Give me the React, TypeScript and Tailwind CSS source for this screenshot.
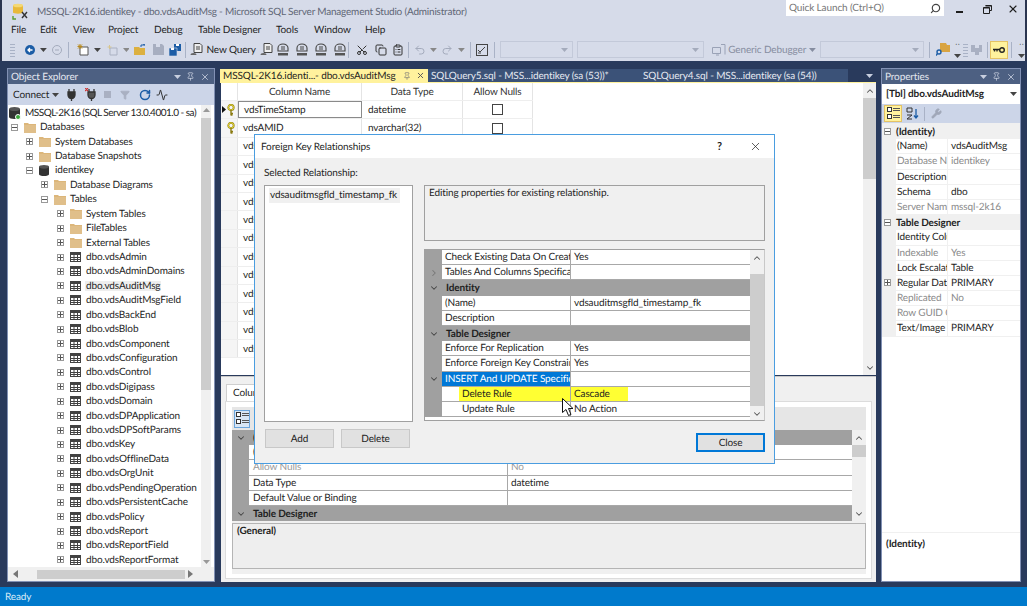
import React from "react";
import { Search, X, Pin, ChevronDown, ChevronUp, ChevronRight, RotateCw, Activity, Filter, Scissors, Copy, ClipboardList, Undo2, Redo2, Wrench } from "lucide-react";

const Caret = ({ c = "#444", className = "" }: { c?: string; className?: string }) => (
  <svg width="7" height="4" viewBox="0 0 7 4" className={className}><path d="M0 0h7L3.5 4z" fill={c} /></svg>
);
const Folder = () => (
  <svg width="12" height="11" viewBox="0 0 12 11" className="shrink-0"><path d="M0 1h4l1 1h7v9H0z" fill="#dcb67a" /><path d="M0 3h12v8H0z" fill="#e0bf8a" /></svg>
);
const TableIc = () => (
  <svg width="11" height="10" viewBox="0 0 11 10" className="shrink-0"><rect x=".5" y=".5" width="10" height="9" fill="#fff" stroke="#424242" /><path d="M0 1h11v2H0z" fill="#424242" /><path d="M.5 5.500h10M.5 7.500h10M4 3v7M7.500 3v7" stroke="#424242" strokeWidth="1" fill="none" /></svg>
);
const Db = ({ s = 11 }: { s?: number }) => (
  <svg width={s} height={s + 1} viewBox="0 0 11 12" className="shrink-0"><path d="M0 2v8c0 1.200 2.500 2 5.500 2s5.500-.8 5.500-2V2z" fill="#333" /><ellipse cx="5.500" cy="2" rx="5.500" ry="2" fill="#555" /></svg>
);
const Box = ({ minus = false }: { minus?: boolean }) => (
  <span className="w-[7px] h-[7px] border border-[#9a9a9a] bg-white flex items-center justify-center shrink-0">
    <svg width="5" height="5" viewBox="0 0 5 5"><path d={minus ? "M0 2.500h5" : "M0 2.500h5M2.500 0v5"} stroke="#555" fill="none" /></svg>
  </span>
);
const Key = () => (
  <svg width="8" height="12" viewBox="0 0 8 12" className="shrink-0"><circle cx="4" cy="3.500" r="2.700" fill="none" stroke="#8a7a10" strokeWidth="1.800" /><circle cx="4" cy="3.500" r="2.700" fill="none" stroke="#f2e23a" strokeWidth=".9" /><path d="M4 6v5.500M4 9.500h2M4 11h1.500" stroke="#8a7a10" strokeWidth="1.400" fill="none" /></svg>
);
const Plug = ({ red = false }: { red?: boolean }) => (
  <svg width="13" height="13" viewBox="0 0 13 13"><path d="M4 1v3M9 1v3M3 4h7v3a3.500 3.500 0 0 1-7 0zM6.500 10v3" stroke="#333" strokeWidth="1.300" fill={red ? "#555" : "#333"} />{red && <path d="M0 0l3 3M3 0L0 3" stroke="#c33" strokeWidth="1.200" />}</svg>
);
const PropsIc = () => (
  <svg width="13" height="13" viewBox="0 0 13 13"><rect x=".5" y=".5" width="4" height="4" fill="#fff" stroke="#333" /><rect x=".5" y="7.500" width="4" height="4" fill="#fff" stroke="#333" /><path d="M6 1.500h7M6 3.500h7M6 8.500h7M6 10.500h7" stroke="#555" fill="none" /></svg>
);
const QueryIc = () => (
  <svg width="13" height="13" viewBox="0 0 13 13" className="shrink-0"><path d="M4 .5h6l2 2v7H4z" fill="#eee" stroke="#444" /><path d="M6 4h4M6 6h4" stroke="#444" fill="none" /><path d="M.5 12a3 2 0 0 1 6 0" fill="#666" /></svg>
);
const DbQ = () => (
  <svg width="12" height="13" viewBox="0 0 12 13" className="shrink-0"><path d="M1 5a5 4 0 0 1 10 0v3H1z" fill="none" stroke="#444" strokeWidth="1.100" /><path d="M4 4h4M4 6h4" stroke="#444" fill="none" /><path d="M1 10h10v2.500H1z" fill="#555" /></svg>
);
const Sep = ({ ml }: { ml: string }) => <span className={`w-px h-[16px] shrink-0 bg-[#a9b2c6] ${ml}`} />;

const tree: [number, string, string][] = [
  [0, "m", "Databases"],
  [1, "p", "System Databases"],
  [1, "p", "Database Snapshots"],
  [1, "d", "identikey"],
  [2, "p", "Database Diagrams"],
  [2, "m", "Tables"],
  [3, "p", "System Tables"],
  [3, "p", "FileTables"],
  [3, "p", "External Tables"],
  ...[
    "Admin", "AdminDomains", "AuditMsg", "AuditMsgField", "BackEnd", "Blob", "Component", "Configuration", "Control", "Digipass", "Domain", "DPApplication", "DPSoftParams", "Key", "OfflineData", "OrgUnit", "PendingOperation", "PersistentCache", "Policy", "Report", "ReportField", "ReportFormat",
  ].map((n) => [3, "t", "dbo.vds" + n] as [number, string, string]),
];
const indent = ["ml-[11px]", "ml-[26px]", "ml-[41px]", "ml-[57px]"];

const propsRows: [string, string, number][] = [
  ["(Identity)", "", 2],
  ["(Name)", "vdsAuditMsg", 0],
  ["Database Name", "identikey", 1],
  ["Description", "", 0],
  ["Schema", "dbo", 0],
  ["Server Name", "mssql-2k16", 1],
  ["Table Designer", "", 2],
  ["Identity Column", "", 0],
  ["Indexable", "Yes", 1],
  ["Lock Escalation", "Table", 0],
  ["Regular Data Space", "PRIMARY", 3],
  ["Replicated", "No", 1],
  ["Row GUID Column", "", 1],
  ["Text/Image", "PRIMARY", 0],
];

const cols = ["vdsTimeStamp", "vdsAMID", "vdsAMType", "vdsAMData", "vdsAMUser", "vdsAMHost", "vdsAMAddr", "vdsAMAgent", "vdsAMCode", "vdsAMDesc", "vdsAMInfo", "vdsAMOrg", "vdsAMRef", "vdsAMTime"];

type GR = { k: "cat" | "row"; n: string; v?: string; chev?: "d" | "r"; sel?: boolean; yellow?: boolean; child?: boolean; gray?: boolean };
const fk: GR[] = [
  { k: "row", n: "Check Existing Data On Creation", v: "Yes" },
  { k: "row", n: "Tables And Columns Specification", v: "", chev: "r" },
  { k: "cat", n: "Identity", chev: "d" },
  { k: "row", n: "(Name)", v: "vdsauditmsgfld_timestamp_fk" },
  { k: "row", n: "Description", v: "" },
  { k: "cat", n: "Table Designer", chev: "d" },
  { k: "row", n: "Enforce For Replication", v: "Yes" },
  { k: "row", n: "Enforce Foreign Key Constraint", v: "Yes" },
  { k: "row", n: "INSERT And UPDATE Specification", v: "", chev: "d", sel: true },
  { k: "row", n: "Delete Rule", v: "Cascade", child: true, yellow: true },
  { k: "row", n: "Update Rule", v: "No Action", child: true },
];
const lower: GR[] = [
  { k: "cat", n: "(General)", chev: "d" },
  { k: "row", n: "(Name)", v: "vdsTimeStamp" },
  { k: "row", n: "Allow Nulls", v: "No", gray: true },
  { k: "row", n: "Data Type", v: "datetime" },
  { k: "row", n: "Default Value or Binding", v: "" },
  { k: "cat", n: "Table Designer", chev: "d" },
];

const Grid = ({ rows, nameW, pad = "pl-[3px]" }: { rows: GR[]; nameW: string; pad?: string }) => (
  <div className="flex-1 min-w-0 text-[#1e1e1e]">
    {rows.map((r) =>
      r.k === "cat" ? (
        <div key={r.n} className="h-[15.2px] bg-[#a0a0a0] flex items-center">
          <span className="w-[17px] flex justify-center shrink-0"><ChevronDown size={10} strokeWidth={2.5} color="#444" /></span>
          <span className="font-bold pl-[4px]">{r.n}</span>
        </div>
      ) : (
        <div key={r.n} className="h-[15.2px] flex bg-[#a0a0a0]">
          <span className="w-[17px] flex justify-center items-center shrink-0">
            {r.chev === "r" && <ChevronRight size={10} strokeWidth={2.5} color="#777" />}
            {r.chev === "d" && <ChevronDown size={10} strokeWidth={2.5} color="#444" />}
          </span>
          <div className="flex-1 min-w-0 flex bg-white border-b border-[#a8a8a8]">
            <div className={`${nameW} shrink-0 flex border-r border-[#a8a8a8] overflow-hidden`}>
              {r.child && <span className="w-[17px] shrink-0 bg-white" />}
              <span className={`flex-1 min-w-0 ${pad} leading-[15px] whitespace-nowrap overflow-hidden ${r.sel ? "bg-[#0078d7] text-white" : ""} ${r.yellow ? "bg-[#ffff33]" : ""} ${r.gray ? "text-[#9a9a9a]" : ""}`}>{r.n}</span>
            </div>
            <span className={`pl-[3px] leading-[15px] whitespace-nowrap ${r.yellow ? "bg-[#ffff33] w-[57px]" : ""} ${r.gray ? "text-[#9a9a9a]" : ""}`}>{r.v}</span>
          </div>
        </div>
      )
    )}
  </div>
);

const Scroll = ({ w = "w-[14px]", top, h }: { w?: string; top: string; h: string }) => (
  <div className={`${w} shrink-0 h-full bg-[#f0f0f0] flex flex-col items-center`}>
    <span className="h-[15px] shrink-0 flex items-center"><ChevronUp size={10} strokeWidth={2.5} color="#555" /></span>
    <div className={`w-full flex-1 ${top}`}><div className={`w-full bg-[#cdcdcd] ${h}`} /></div>
    <span className="h-[15px] shrink-0 flex items-center"><ChevronDown size={10} strokeWidth={2.5} color="#555" /></span>
  </div>
);

export default function App() {
  return (
    <div className="relative w-[1027px] h-[606px] overflow-hidden flex flex-col bg-[#293a5c] font-['Lato',sans-serif] text-[10px] tracking-[-0.12px] leading-none text-[#1e1e1e] [text-rendering:geometricPrecision]">
      {/* Chrome */}
      <div className="bg-[#d6dbe9] h-[61px] shrink-0 border-l-2 border-r-2 border-[#2b3550]">
        <div className="h-[22px] flex items-start">
          <svg width="17" height="17" viewBox="0 0 17 17" className="ml-[10px] mt-[3px] shrink-0">
            <path d="M1 2.500C1 .8 11 .8 11 2.500v7c0 1.500-10 1.500-10 0z" fill="#e8b93a" /><ellipse cx="6" cy="2.500" rx="5" ry="1.800" fill="#f4d876" />
            <path d="M10 9l5 6M15 9l-5 6" stroke="#333" strokeWidth="1.400" /><path d="M1 13v3h3" stroke="#5a9e2f" strokeWidth="1.400" fill="none" />
          </svg>
          <span className="ml-[8px] mt-[7px] text-[#5f6675] whitespace-nowrap tracking-[-0.2px]">MSSQL-2K16.identikey - dbo.vdsAuditMsg - Microsoft SQL Server Management Studio (Administrator)</span>
          <div className="ml-auto w-[158px] h-[16px] bg-white flex items-center justify-between px-[3px] text-[#777] mr-[8px]">
            <span>Quick Launch (Ctrl+Q)</span>
            <Search size={11} color="#444" className="-scale-x-100" strokeWidth={2.5} />
          </div>
          <div className="flex items-center w-[73px] h-[18px] text-[#1e1e1e]">
            <span className="ml-[4px] w-[7px] h-[2px] bg-[#1e1e1e] mt-[6px]" />
            <svg width="9" height="9" viewBox="0 0 9 9" className="ml-[20px]"><path d="M2.500.5h6v5h-2M.5 2.500h6v6h-6z" fill="none" stroke="#1e1e1e" /><path d="M.5 3h6M2.500 1h6" stroke="#1e1e1e" /></svg>
            <X size={12} strokeWidth={2.2} className="ml-[15px]" />
          </div>
        </div>
        <div className="h-[16px] flex items-center text-[#1e1e1e] pl-[9px]">
          <span className="w-[29px]">File</span>
          <span className="w-[33px]">Edit</span>
          <span className="w-[35px]">View</span>
          <span className="w-[46px]">Project</span>
          <span className="w-[44px]">Debug</span>
          <span className="w-[78px]">Table Designer</span>
          <span className="w-[38px]">Tools</span>
          <span className="w-[51px]">Window</span>
          <span>Help</span>
        </div>
        <div className="h-[23px] flex items-center">
          <span className="ml-[8px] w-[5px] h-[14px] bg-[repeating-linear-gradient(0deg,#a9b2c6_0_1px,transparent_1px_3px)] shrink-0" />
          <svg width="10" height="10" viewBox="0 0 10 10" className="ml-[10px] shrink-0"><circle cx="5" cy="5" r="5" fill="#1c5da6" /><path d="M7.500 5h-4M5 3L3 5l2 2" stroke="#fff" strokeWidth="1.300" fill="none" /></svg>
          <Caret className="ml-[5px]" />
          <svg width="10" height="10" viewBox="0 0 10 10" className="ml-[5px] shrink-0"><circle cx="5" cy="5" r="4.500" fill="none" stroke="#a4abbc" /><path d="M3 5h4" stroke="#a4abbc" /></svg>
          <Sep ml="ml-[6px]" />
          <svg width="12" height="13" viewBox="0 0 12 13" className="ml-[8px] shrink-0"><path d="M3 4h8v8H3z" fill="#fff" stroke="#555" /><path d="M3 1v5M0.500 3.500h5M1 1.500l4 4M5 1.500l-4 4" stroke="#b88a1e" fill="none" /></svg>
          <Caret className="ml-[5px]" />
          <svg width="11" height="12" viewBox="0 0 11 12" className="ml-[6px] shrink-0"><path d="M3 4h7v7H3z" fill="none" stroke="#aab1c2" /><path d="M2.500 1v4M.5 3h4" stroke="#d8c58c" /></svg>
          <Caret c="#888" className="ml-[5px]" />
          <svg width="12" height="11" viewBox="0 0 12 11" className="ml-[5px] shrink-0"><path d="M0 3h5l1 1h5v7H0z" fill="#dcb040" /><path d="M7 3V1h4l-2-1" stroke="#1c5da6" fill="none" /></svg>
          <svg width="11" height="11" viewBox="0 0 11 11" className="ml-[7px] shrink-0"><path d="M0 0h9l2 2v9H0z" fill="#a7aec0" /><path d="M3 0h4v3H3z" fill="#d6dbe9" /></svg>
          <svg width="12" height="12" viewBox="0 0 12 12" className="ml-[5px] shrink-0"><path d="M5 0h7v7H5z" fill="#1c5da6" /><path d="M0 4h8v8H0z" fill="#1c5da6" stroke="#d6dbe9" strokeWidth=".6" /><path d="M2 4h3v2H2zM7 0h3v2H7z" fill="#fff" /></svg>
          <Sep ml="ml-[4px]" />
          <span className="ml-[4px]"><QueryIc /></span>
          <span className="ml-[3px] w-[47px] whitespace-nowrap">New Query</span>
          <span className="ml-[7px]"><QueryIc /></span>
          <span className="ml-[4px]"><DbQ /></span>
          <span className="ml-[7px]"><DbQ /></span>
          <span className="ml-[7px]"><DbQ /></span>
          <span className="ml-[7px]"><DbQ /></span>
          <Sep ml="ml-[2px]" />
          <Scissors size={12} color="#333" className="ml-[7px] shrink-0 -rotate-90" />
          <Copy size={12} color="#333" className="ml-[7px] shrink-0" />
          <ClipboardList size={12} color="#333" className="ml-[5px] shrink-0" />
          <Sep ml="ml-[4px]" />
          <Undo2 size={12} color="#a4abbc" className="ml-[5px] shrink-0" />
          <Caret c="#888" className="ml-[4px]" />
          <Redo2 size={12} color="#a4abbc" className="ml-[4px] shrink-0" />
          <Caret c="#888" className="ml-[5px]" />
          <Sep ml="ml-[5px]" />
          <svg width="12" height="12" viewBox="0 0 12 12" className="ml-[5px] shrink-0"><rect x=".5" y=".5" width="11" height="11" fill="none" stroke="#444" /><path d="M2 6l2 2 5-5M2 9h3" stroke="#444" fill="none" /></svg>
          <Sep ml="ml-[6px]" />
          <div className="ml-[5px] w-[73px] h-[17px] border border-[#c3c9d9] flex items-center justify-end pr-[4px] shrink-0"><Caret c="#a4abbc" /></div>
          <div className="ml-[4px] w-[127px] h-[17px] border border-[#c3c9d9] flex items-center justify-end pr-[4px] shrink-0"><Caret c="#a4abbc" /></div>
          <svg width="14" height="12" viewBox="0 0 14 12" className="ml-[8px] shrink-0"><path d="M.5 3.500h8v6h-8zM4 11h3M9 .5h4v10" fill="none" stroke="#9aa2b6" /></svg>
          <span className="ml-[2px] w-[77px] whitespace-nowrap text-[#868da0]">Generic Debugger</span>
          <Caret c="#868da0" className="ml-[4px]" />
          <div className="ml-[4px] w-[104px] h-[17px] border border-[#c3c9d9] flex items-center justify-end pr-[4px] shrink-0"><Caret c="#a4abbc" /></div>
          <Sep ml="ml-[5px]" />
          <svg width="14" height="13" viewBox="0 0 14 13" className="ml-[6px] shrink-0"><path d="M4 0h6l1 2h3v7H4z" fill="#d9a441" /><circle cx="3" cy="9" r="2" fill="none" stroke="#1c5da6" strokeWidth="1.400" /><path d="M1.500 10.500L0 12.500" stroke="#1c5da6" strokeWidth="1.400" /></svg>
          <div className="ml-[5px] w-[6px] flex flex-col items-center gap-[6px] shrink-0"><span className="text-[6px] tracking-[1px]">··</span><Caret /></div>
          <span className="ml-[2px] w-[5px] h-[14px] bg-[repeating-linear-gradient(0deg,#a9b2c6_0_1px,transparent_1px_3px)] shrink-0" />
          <svg width="11" height="11" viewBox="0 0 11 11" className="ml-[3px] shrink-0"><path d="M0 1h4v3h4V1h3v7H8v3H4V8H0z" fill="#a9b0c2" /></svg>
          <Sep ml="ml-[5px]" />
          <div className="ml-[2px] w-[18px] h-[18px] bg-[#fff29d] border border-[#e5c365] flex items-center justify-center shrink-0">
            <svg width="12" height="6" viewBox="0 0 12 6"><circle cx="9" cy="3" r="2.300" fill="none" stroke="#222" strokeWidth="1.400" /><path d="M0 2.500h7M1.500 2.500v2M4 2.500v2" stroke="#222" strokeWidth="1.300" fill="none" /></svg>
          </div>
          <Sep ml="ml-[3px]" />
          <div className="ml-[7px] w-[6px] flex flex-col items-center gap-[6px] shrink-0"><span className="text-[6px] tracking-[1px]">··</span><Caret /></div>
        </div>
      </div>

      {/* Dock */}
      <div className="flex-1 min-h-0 flex pt-[7px] pb-[5px] pl-[7px] pr-[6px] gap-[5px]">
        {/* Object Explorer */}
        <div className="w-[208px] shrink-0 flex flex-col border border-[#8291b4] bg-white">
          <div className="h-[15px] shrink-0 bg-[#4d6082] flex items-center pl-[3px] pr-[4px] text-[#e6e9f1]">
            <span>Object Explorer</span>
            <span className="ml-auto flex items-center gap-[5px]"><Caret c="#c8cfdf" /><Pin size={9} color="#c8cfdf" /><X size={10} color="#c8cfdf" strokeWidth={2} /></span>
          </div>
          <div className="h-[21px] shrink-0 bg-[#ccd5e8] flex items-center pl-[5px]">
            <span>Connect</span>
            <Caret className="ml-[3px]" />
            <span className="ml-[6px]"><Plug /></span>
            <span className="ml-[7px]"><Plug red /></span>
            <span className="ml-[6px] w-[7px] h-[7px] bg-[#a9b0c2]" />
            <Filter size={10} color="#a9b0c2" fill="#a9b0c2" className="ml-[9px]" />
            <RotateCw size={12} color="#1c5da6" strokeWidth={3} className="ml-[9px]" />
            <Activity size={12} color="#333" className="ml-[5px]" />
          </div>
          <div className="flex-1 min-h-0 flex">
            <div className="flex-1 min-w-0 overflow-hidden">
              <div className="h-[15px] flex items-center whitespace-nowrap">
                <span className="relative ml-[1px]"><Db s={11} /><span className="absolute -right-[1px] -bottom-[1px] w-[6px] h-[6px] rounded-full bg-[#3aa63a] border border-white" /></span>
                <span className="ml-[5px] tracking-[-0.5px]">MSSQL-2K16 (SQL Server 13.0.4001.0 - sa)</span>
              </div>
              {tree.map(([lv, kind, label]) => (
                <div key={label} className="h-[14.43px] flex items-center whitespace-nowrap">
                  <span className={indent[lv] + " -translate-x-[8px]"}><Box minus={kind === "m" || kind === "d"} /></span>
                  <span className="ml-[-2px] w-[13px] flex shrink-0">{kind === "t" ? <TableIc /> : kind === "d" ? <Db s={10} /> : <Folder />}</span>
                  <span className={`ml-[2px] px-[1px] ${label === "dbo.vdsAuditMsg" ? "bg-[#eeeeee]" : ""}`}>{label}</span>
                </div>
              ))}
            </div>
            <div className="w-[10px] mr-[3px] shrink-0 bg-[#f0f0f0] flex flex-col items-center">
              <span className="h-[10px] flex items-center"><Caret c="#999" className="rotate-180" /></span>
              <div className="w-full h-[272px] bg-[#cdcdcd] mt-[3px]" />
              <span className="mt-auto h-[10px] flex items-center"><Caret c="#999" /></span>
            </div>
          </div>
          <div className="h-[14px] shrink-0 bg-[#f0f0f0] flex items-center pl-[5px] pr-[20px] text-[#888]">
            <svg width="5" height="8" viewBox="0 0 5 8"><path d="M5 0v8L0 4z" fill="#777" /></svg>
            <span className="ml-[19px] h-[9px] w-[148px] bg-[#cdcdcd]" />
            <svg width="5" height="8" viewBox="0 0 5 8" className="ml-[3px]"><path d="M0 0v8l5-4z" fill="#777" /></svg>
          </div>
        </div>

        {/* Document area */}
        <div className="w-[656px] shrink-0 flex flex-col">
          <div className="h-[13px] mt-[1px] shrink-0 flex items-center">
            <div className="w-[208px] h-full bg-[#fff29d] flex items-center pl-[3px]">
              <span className="whitespace-nowrap">MSSQL-2K16.identi...- dbo.vdsAuditMsg</span>
              <Pin size={8} className="ml-auto" color="#777" />
              <X size={9} className="ml-[5px] mr-[3px]" color="#555" strokeWidth={2.5} />
            </div>
            <div className="w-[420px] h-full bg-[#3b5278] flex items-center text-[#e6e9f1] whitespace-nowrap">
              <span className="ml-[3px] w-[212px]">SQLQuery5.sql - MSS...identikey (sa (53))*</span>
              <span>SQLQuery4.sql - MSS...identikey (sa (54))</span>
            </div>
            <Caret c="#c8cfdf" className="ml-[18px]" />
          </div>
          <div className="h-[1px] shrink-0 bg-[#fff29d]" />
          <div className="h-[292px] shrink-0 bg-white flex overflow-hidden ml-[1px]">
            <div className="w-[312px] shrink-0">
              <div className="h-[18px] flex items-center border-b border-[#eeeeee] text-[#333]">
                <span className="w-[17px] border-r border-[#e4e4e4] h-full" />
                <span className="w-[124px] text-center border-r border-[#e4e4e4] h-full leading-[18px]">Column Name</span>
                <span className="w-[101px] text-center border-r border-[#e4e4e4] h-full leading-[18px]">Data Type</span>
                <span className="w-[70px] text-center border-r border-[#e4e4e4] h-full leading-[18px]">Allow Nulls</span>
              </div>
              {cols.map((c, i) => (
                <div key={c} className="h-[18.4px] flex items-center border-b border-[#eeeeee]">
                  <span className="w-[17px] h-full flex items-center justify-end pr-[2px] gap-[1px] border-r border-[#e4e4e4] bg-[#f5f5f5]">
                    {i === 0 && <svg width="4" height="7" viewBox="0 0 4 7"><path d="M0 0l4 3.500L0 7z" fill="#111" /></svg>}
                    {i < 2 && <Key />}
                  </span>
                  <span className={`w-[124px] h-full flex items-center pl-[5px] ${i === 0 ? "border border-[#8a8a8a]" : "border-r border-[#e4e4e4]"}`}>{c}</span>
                  <span className="w-[101px] h-full flex items-center pl-[6px] border-r border-[#e4e4e4]">{i === 0 ? "datetime" : "nvarchar(32)"}</span>
                  <span className="w-[70px] h-full flex items-center justify-center border-r border-[#e4e4e4]"><span className="w-[11px] h-[11px] border border-[#444] bg-white" /></span>
                </div>
              ))}
            </div>
            <div className="flex-1" />
            <Scroll w="w-[13px]" top="pt-[0px]" h="h-[81px]" />
          </div>
          <div className="flex-1 min-h-0 bg-[#f0f0f0] border-t border-[#c8c8c8] mt-[1px] ml-[1px] flex flex-col pt-[7px]">
            <div className="h-[17px] shrink-0 flex pl-[5px]">
              <span className="w-[110px] bg-white border border-b-0 border-[#cfcfcf] pl-[6px] flex items-center whitespace-nowrap">Column Properties</span>
            </div>
            <div className="flex-1 min-h-0 bg-white border border-[#dcdcdc] mx-[4px] mb-[3px] p-[5px] pl-[6px] pb-[4px] flex flex-col">
              <div className="flex-1 min-h-0 bg-[#f0f0f0] flex flex-col">
                <div className="h-[23px] shrink-0 bg-[#e6e6e6] flex items-center pl-[2px]">
                  <span className="w-[16px] h-[18px] bg-[#d8e6f5] border border-[#6ba5dc] flex items-center justify-center"><PropsIc /></span>
                </div>
                <div className="h-[91px] shrink-0 flex">
                  <Grid rows={lower} nameW="w-[259px]" pad="pl-[4px]" />
                  <Scroll w="w-[14px]" top="pt-0" h="h-[12px]" />
                </div>
                <div className="flex-1 mt-[2px] mb-[5px] border border-[#b4b4b4] bg-[#eeeeee] pl-[4px] pt-[2px] font-bold">(General)</div>
              </div>
            </div>
          </div>
        </div>

        {/* Properties */}
        <div className="flex-1 min-w-0 flex flex-col border border-[#8291b4] bg-white">
          <div className="h-[15px] shrink-0 bg-[#4d6082] flex items-center pl-[3px] pr-[4px] text-[#e6e9f1]">
            <span>Properties</span>
            <span className="ml-auto flex items-center gap-[5px]"><Caret c="#c8cfdf" /><Pin size={9} color="#c8cfdf" /><X size={10} color="#c8cfdf" strokeWidth={2} /></span>
          </div>
          <div className="h-[20px] shrink-0 flex items-center pl-[4px] pr-[3px] font-bold">
            <span>[Tbl] dbo.vdsAuditMsg</span>
            <Caret className="ml-auto" />
          </div>
          <div className="h-[19px] shrink-0 bg-[#ccd5e8] flex items-center pl-[2px]">
            <span className="w-[18px] h-[17px] bg-[#fff29d] border border-[#e5c365] flex items-center justify-center"><PropsIc /></span>
            <svg width="13" height="13" viewBox="0 0 13 13" className="ml-[4px]"><path d="M1 1h5v4H1zM1 8h5L1 12h5" fill="none" stroke="#333" /><path d="M10 2v9M8 8.500l2 2.500 2-2.500" stroke="#1c5da6" strokeWidth="1.300" fill="none" /></svg>
            <span className="ml-[5px] w-px h-[14px] bg-[#a9b2c6]" />
            <Wrench size={11} color="#a0a7b8" fill="#a0a7b8" className="ml-[6px]" />
          </div>
          <div className="h-[1px] shrink-0 bg-[#f0f0f0]" />
          {propsRows.map(([n, v, k]) =>
            k === 2 ? (
              <div key={n} className="h-[15.2px] shrink-0 bg-[#f0f0f0] flex items-center pl-[2px] font-bold">
                <Box minus />
                <span className="ml-[5px]">{n}</span>
              </div>
            ) : (
              <div key={n} className="h-[15.2px] shrink-0 flex border-b border-[#f0f0f0]">
                <span className="w-[14px] shrink-0 bg-[#f0f0f0] flex items-center pl-[2px]">{k === 3 && <Box />}</span>
                <span className={`w-[52px] shrink-0 pl-[1px] whitespace-nowrap overflow-hidden leading-[15px] border-r border-[#f0f0f0] ${k === 1 ? "text-[#8a8a8a]" : ""}`}>{n}</span>
                <span className={`pl-[3px] whitespace-nowrap leading-[15px] ${k === 1 ? "text-[#8a8a8a]" : ""}`}>{v}</span>
              </div>
            )
          )}
          <div className="flex-1 min-h-0" />
          <div className="h-[49px] shrink-0 border-t border-[#f0f0f0] pl-[4px] pt-[6px] font-bold">(Identity)</div>
        </div>
      </div>

      {/* Status */}
      <div className="h-[19px] shrink-0 bg-[#007acc] flex items-center pl-[5px] text-[#d9ecf8]">Ready</div>

      {/* Dialog */}
      <div className="absolute left-[254px] top-[134px] w-[521px] h-[330px] border border-[#4a9de0] bg-[#f0f0f0] flex flex-col">
        <div className="h-[23px] shrink-0 bg-white flex items-center pl-[6px]">
          <span>Foreign Key Relationships</span>
          <span className="ml-auto text-[11px] font-bold">?</span>
          <X size={13} strokeWidth={1.3} className="ml-[27px] mr-[12px]" />
        </div>
        <div className="flex-1 min-h-0 flex pl-[9px] pr-[9px]">
          <div className="w-[160px] shrink-0 flex flex-col">
            <span className="h-[12px] mt-[10px]">Selected Relationship:</span>
            <div className="mt-[5px] w-[149px] h-[237px] bg-white border border-[#a0a0a0] p-[2px] pl-[4px]">
              <span className="block h-[15px] w-[131px] bg-[#f0f0f0] leading-[15px] pl-[1px] whitespace-nowrap">vdsauditmsgfld_timestamp_fk</span>
            </div>
            <div className="mt-[7px] flex gap-[7px] ml-[1px]">
              <span className="w-[69px] h-[19px] bg-[#e1e1e1] border border-[#c8c8c8] flex items-center justify-center">Add</span>
              <span className="w-[69px] h-[19px] bg-[#e1e1e1] border border-[#c8c8c8] flex items-center justify-center">Delete</span>
            </div>
          </div>
          <div className="flex-1 min-w-0 flex flex-col">
            <div className="mt-[27px] h-[56px] shrink-0 border border-[#a0a0a0] pl-[4px] pt-[2px]">Editing properties for existing relationship.</div>
            <div className="mt-[8px] h-[172px] shrink-0 bg-white border border-[#a0a0a0] border-r-[#c8c8c8] flex items-start">
              <Grid rows={fk} nameW="w-[129px]" />
              <div className="w-[14px] h-full shrink-0"><Scroll w="w-[14px]" top="pt-[9px]" h="h-[132px]" /></div>
            </div>
            <div className="mt-[12px] flex justify-end">
              <span className="w-[69px] h-[19px] bg-[#e1e1e1] border-2 border-[#0078d7] flex items-center justify-center">Close</span>
            </div>
          </div>
        </div>
      </div>

      {/* Cursor */}
      <svg width="13" height="18" viewBox="0 0 13 18" className="absolute left-[562px] top-[398px]"><path d="M.5.5v14l3.500-3 2.500 6 2.500-1-2.500-6h4.500z" fill="#fff" stroke="#111" /></svg>
    </div>
  );
}
